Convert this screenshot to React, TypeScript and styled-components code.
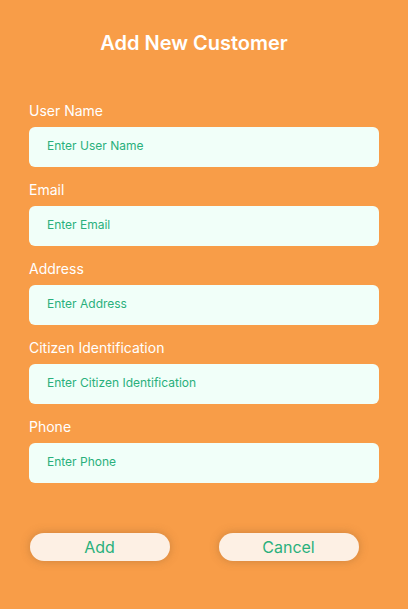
import styled, { createGlobalStyle } from "styled-components";

const GlobalStyle = createGlobalStyle`
    body {
        margin: 0;
        background-color: #F89D48;
        font-family: Inter, "Noto Sans", sans-serif;
    }
`

const SPage = styled.div`
    width: 408px;
    min-height: 609px;
    box-sizing: border-box;
    padding-top: 31px;
    background-color: #F89D48;
`

const STitle = styled.h2`
    width: 388px;
    margin: 0 0 47px;
    text-align: center;
    font-size: 20px;
    font-weight: 600;
    line-height: 24px;
    color: #ffffff;
`

const SForm = styled.form`
    width: 350px;
    margin: 0 29px;
    display: flex;
    flex-direction: column;
`

const SField = styled.div`
    display: flex;
    flex-direction: column;
    margin-bottom: 14px;

    label {
        font-size: 14px;
        font-weight: 400;
        line-height: 17px;
        color: #ffffff;
        margin-bottom: 8px;
    }
`

const SInput = styled.input`
    height: 40px;
    box-sizing: border-box;
    border: none;
    border-radius: 6px;
    padding: 0 18px 3px;
    background-color: #F1FFF9;
    font-family: Inter, "Noto Sans", sans-serif;
    font-size: 12px;
    color: #23A874;
    outline: none;

    &::placeholder {
        color: #2AB07C;
    }
`

const SButtons = styled.div`
    width: 388px;
    margin-top: 36px;
    display: flex;
    justify-content: center;
    gap: 49px;
`

const SButton = styled.button`
    width: 140px;
    height: 28px;
    border: none;
    border-radius: 14px;
    background-color: #FDF0E4;
    box-shadow: 0 0 10px rgba(120, 80, 40, 0.35);
    font-family: Inter, "Noto Sans", sans-serif;
    font-size: 16px;
    font-weight: 400;
    color: #2AB07C;
    cursor: pointer;
`

const fields = [
    { label: "User Name", placeholder: "Enter User Name" },
    { label: "Email", placeholder: "Enter Email" },
    { label: "Address", placeholder: "Enter Address" },
    { label: "Citizen Identification", placeholder: "Enter Citizen Identification" },
    { label: "Phone", placeholder: "Enter Phone" },
]

const App = () => {
    return (
        <>
            <GlobalStyle />
            <SPage>
                <STitle>Add New Customer</STitle>
                <SForm onSubmit={e => e.preventDefault()}>
                    {fields.map(f => (
                        <SField key={f.label}>
                            <label>{f.label}</label>
                            <SInput placeholder={f.placeholder} />
                        </SField>
                    ))}
                </SForm>
                <SButtons>
                    <SButton>Add</SButton>
                    <SButton>Cancel</SButton>
                </SButtons>
            </SPage>
        </>
    )
}

export default App;
